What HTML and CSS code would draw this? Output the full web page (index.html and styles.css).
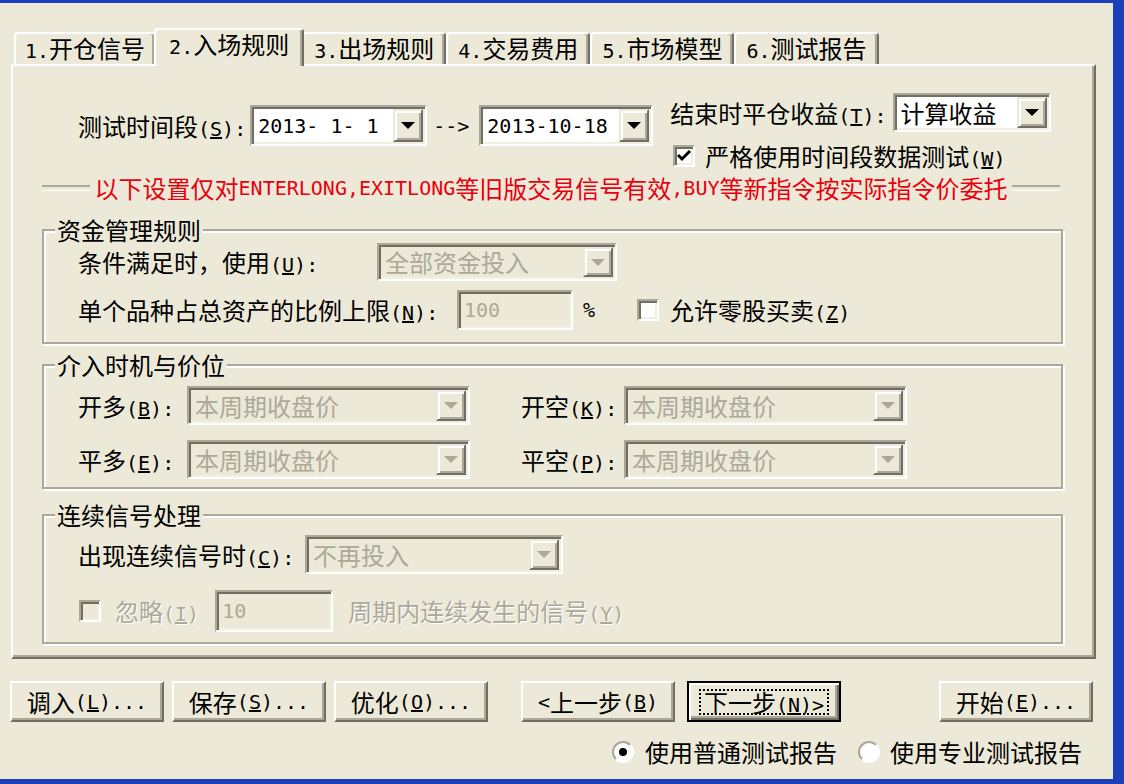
FILE: index.html
```html
<!DOCTYPE html>
<html>

<head>
    <meta charset="utf-8" />
    <title>测试设置</title>
    <link rel="stylesheet" href="styles.css">
</head>

<body>
    <div class="dialog">
        <div class="tabs">
            <div class="tab"><span class="en">1.</span>开仓信号</div>
            <div class="tab current"><span class="en">2.</span>入场规则</div>
            <div class="tab"><span class="en">3.</span>出场规则</div>
            <div class="tab"><span class="en">4.</span>交易费用</div>
            <div class="tab"><span class="en">5.</span>市场模型</div>
            <div class="tab"><span class="en">6.</span>测试报告</div>
        </div>

        <div class="panel">
            <div class="period">
                <div class="periodLeft">
                    <span class="dateLbl">测试时间段<span class="en">(<u>S</u>):</span></span>
                    <div class="combo dateFrom">
                        <span class="val en">2013- 1- 1</span>
                        <span class="drop"><i class="tri"></i></span>
                    </div>
                    <span class="en toTxt">--&gt;</span>
                    <div class="combo dateTo">
                        <span class="val en">2013-10-18</span>
                        <span class="drop"><i class="tri"></i></span>
                    </div>
                </div>
                <div class="periodRight">
                    <div class="closeRow">
                        <span class="closeLbl">结束时平仓收益<span class="en">(<u>T</u>):</span></span>
                        <div class="combo closeCombo">
                            <span class="val">计算收益</span>
                            <span class="drop"><i class="tri"></i></span>
                        </div>
                    </div>
                    <div class="strictRow">
                        <span class="chk">
                            <svg width="14" height="12" viewBox="0 0 14 12"><path d="M1 5 L5 9 L13 1" fill="none" stroke="#000" stroke-width="3"/></svg>
                        </span>
                        <span class="chkTxt">严格使用时间段数据测试<span class="en">(<u>W</u>)</span></span>
                    </div>
                </div>
            </div>

            <div class="notice">以下设置仅对<span class="en">ENTERLONG,EXITLONG</span>等旧版交易信号有效<span class="en">,BUY</span>等新指令按实际指令价委托</div>

            <!-- 资金管理 -->
            <div class="group money">
                <div class="gTitle">资金管理规则</div>
                <div class="gRow r1">
                    <span class="lblUse">条件满足时，使用<span class="en">(<u>U</u>):</span></span>
                    <div class="combo off useCombo">
                        <span class="val">全部资金投入</span>
                        <span class="drop"><i class="tri"></i></span>
                    </div>
                </div>
                <div class="gRow r2">
                    <span class="lblLimit">单个品种占总资产的比例上限<span class="en">(<u>N</u>):</span></span>
                    <div class="edit limitEdit"><span class="en">100</span></div>
                    <span class="en pct">%</span>
                    <span class="chk zeroChk"></span>
                    <span class="zeroTxt">允许零股买卖<span class="en">(<u>Z</u>)</span></span>
                </div>
            </div>

            <!-- 介入时机 -->
            <div class="group entry">
                <div class="gTitle">介入时机与价位</div>
                <div class="gRow r1">
                    <span class="lblLong">开多<span class="en">(<u>B</u>):</span></span>
                    <div class="combo off priceCombo">
                        <span class="val">本周期收盘价</span>
                        <span class="drop"><i class="tri"></i></span>
                    </div>
                    <span class="lblShort">开空<span class="en">(<u>K</u>):</span></span>
                    <div class="combo off priceCombo">
                        <span class="val">本周期收盘价</span>
                        <span class="drop"><i class="tri"></i></span>
                    </div>
                </div>
                <div class="gRow r2">
                    <span class="lblLong">平多<span class="en">(<u>E</u>):</span></span>
                    <div class="combo off priceCombo">
                        <span class="val">本周期收盘价</span>
                        <span class="drop"><i class="tri"></i></span>
                    </div>
                    <span class="lblShort">平空<span class="en">(<u>P</u>):</span></span>
                    <div class="combo off priceCombo">
                        <span class="val">本周期收盘价</span>
                        <span class="drop"><i class="tri"></i></span>
                    </div>
                </div>
            </div>

            <!-- 连续信号 -->
            <div class="group signal">
                <div class="gTitle">连续信号处理</div>
                <div class="gRow r1">
                    <span class="lblSeq">出现连续信号时<span class="en">(<u>C</u>):</span></span>
                    <div class="combo off seqCombo">
                        <span class="val">不再投入</span>
                        <span class="drop"><i class="tri"></i></span>
                    </div>
                </div>
                <div class="gRow r2">
                    <span class="chk offChk ignoreChk"></span>
                    <span class="dis ignoreTxt">忽略<span class="en">(<u>I</u>)</span></span>
                    <div class="edit countEdit"><span class="en">10</span></div>
                    <span class="dis countTxt">周期内连续发生的信号<span class="en">(<u>Y</u>)</span></span>
                </div>
            </div>
        </div>

        <div class="buttons">
            <div class="btn">调入<span class="en">(<u>L</u>)...</span></div>
            <div class="btn">保存<span class="en">(<u>S</u>)...</span></div>
            <div class="btn">优化<span class="en">(<u>O</u>)...</span></div>
            <div class="btn prev"><span class="en">&lt;</span>上一步<span class="en">(<u>B</u>)</span></div>
            <div class="btn next"><span class="focus">下一步<span class="en">(<u>N</u>)&gt;</span></span></div>
            <div class="btn start">开始<span class="en">(<u>E</u>)...</span></div>
        </div>

        <div class="reports">
            <span class="radio on"><i class="dot"></i></span>
            <span class="rTxt">使用普通测试报告</span>
            <span class="radio radio2"></span>
            <span class="rTxt">使用专业测试报告</span>
        </div>
    </div>
</body>

</html>
```

FILE: styles.css
```css
* {
    box-sizing: border-box;
}

html,
body {
    margin: 0px;
    padding: 0px;
}

body {
    width: 1124px;
    height: 784px;
    overflow: hidden;
    background: #1b3fb8;
    font-family: "Noto Sans CJK SC", sans-serif;
    font-size: 24px;
    line-height: 24px;
    color: #000;
}

.en {
    font-family: "DejaVu Sans Mono", "Liberation Mono", monospace;
    font-size: 20px;
    line-height: 14px;
    white-space: pre;
}

.dialog {
    width: 1113px;
    height: 776px;
    margin-top: 3px;
    padding-top: 25px;
    background: #ece9d8;
}

/* tabs */
.tabs {
    display: flex;
    align-items: flex-end;
    height: 36px;
    padding-left: 14px;
}

.tab {
    height: 32px;
    padding: 0 10px;
    border: 2px solid #fff;
    border-bottom: 0;
    border-right-color: #716f64;
    border-radius: 4px 4px 0 0;
    box-shadow: inset -2px 0 #aca899;
    line-height: 28px;
    white-space: nowrap;
}

.tab:first-child {
    padding: 0 9px;
}

.tab.current {
    height: 38px;
    margin: 0 -2px -2px;
    padding: 0 13px;
    position: relative;
    z-index: 1;
    background: #ece9d8;
}

.panel {
    margin-left: 11px;
    width: 1085px;
    height: 595px;
    border: 2px solid;
    border-color: #fff #716f64 #716f64 #fff;
    box-shadow: inset -2px -2px #aca899;
    padding-left: 29px;
}

/* combo / edit / check */
.combo {
    display: flex;
    padding: 2px;
    border: 2px solid;
    border-color: #aca899 #fff #fff #aca899;
    box-shadow: inset 2px 2px #716f64, inset -2px -2px #f1efe2;
    background: #fff;
}

.combo .val {
    flex: 1;
    display: flex;
    align-items: center;
    padding-left: 4px;
    white-space: nowrap;
}

.drop {
    width: 30px;
    display: flex;
    align-items: center;
    justify-content: center;
    border: 2px solid;
    border-color: #ece9d8 #716f64 #716f64 #ece9d8;
    box-shadow: inset 2px 2px #fff, inset -2px -2px #aca899;
    background: #ece9d8;
}

.tri {
    width: 0;
    height: 0;
    border-left: 7px solid transparent;
    border-right: 7px solid transparent;
    border-top: 7px solid #000;
}

.combo.off {
    background: #ece9d8;
    color: #aca899;
}

.combo.off .tri {
    border-top-color: #aca899;
}

.edit {
    display: flex;
    align-items: center;
    padding-left: 5px;
    border: 2px solid;
    border-color: #aca899 #fff #fff #aca899;
    box-shadow: inset 2px 2px #716f64, inset -2px -2px #f1efe2;
    background: #ece9d8;
    color: #aca899;
}

.chk {
    width: 22px;
    height: 22px;
    display: flex;
    align-items: center;
    justify-content: center;
    border: 2px solid;
    border-color: #aca899 #fff #fff #aca899;
    box-shadow: inset 2px 2px #716f64, inset -2px -2px #f1efe2;
    background: #fff;
}

.chk.offChk {
    background: #ece9d8;
}

.dis {
    color: #aca899;
    text-shadow: 1px 1px #fff;
}

/* top area */
.period {
    display: flex;
    align-items: flex-start;
    margin-top: 27px;
    padding-left: 36px;
}

.periodLeft {
    display: flex;
    align-items: center;
    margin-top: 12px;
}

.dateLbl {
    margin-right: 4px;
}

.dateFrom {
    width: 177px;
    height: 41px;
}

.toTxt {
    margin: 0 10px 0 6px;
}

.dateTo {
    width: 174px;
    height: 41px;
}

.periodRight {
    margin-left: 17px;
}

.closeRow {
    display: flex;
    align-items: center;
}

.closeLbl {
    margin-right: 6px;
}

.closeCombo {
    width: 158px;
    height: 39px;
}

.strictRow {
    display: flex;
    align-items: center;
    height: 22px;
    margin-top: 13px;
    padding-left: 3px;
}

.chkTxt {
    margin-left: 10px;
}

/* red notice line */
.notice {
    display: flex;
    align-items: center;
    width: 1018px;
    height: 24px;
    margin-top: 9px;
    color: #e8000e;
    white-space: nowrap;
}

.notice::before,
.notice::after {
    content: "";
    flex: 1;
    height: 3px;
    border-top: 2px solid #aca899;
    border-bottom: 1px solid #fff;
}

.notice::before {
    margin-right: 5px;
}

.notice::after {
    margin-left: 5px;
}

/* group boxes */
.group {
    width: 1021px;
    border: 2px solid #aca899;
    box-shadow: inset 2px 2px #fff, 2px 2px #fff;
    padding-left: 34px;
}

.gTitle {
    width: fit-content;
    height: 26px;
    margin: -14px 0 0 -23px;
    padding: 0 2px;
    line-height: 26px;
    background: #ece9d8;
}

.gRow {
    display: flex;
    align-items: center;
}

.money {
    margin-top: 29px;
    padding-bottom: 12px;
}

.money .r1 {
    height: 38px;
}

.money .r2 {
    height: 40px;
    margin-top: 9px;
}

.lblUse {
    width: 299px;
}

.useCombo {
    width: 240px;
    height: 38px;
}

.lblLimit {
    width: 379px;
}

.limitEdit {
    width: 116px;
    height: 40px;
}

.pct {
    margin-left: 10px;
}

.zeroChk {
    margin-left: 42px;
}

.zeroTxt {
    margin-left: 11px;
}

.entry {
    margin-top: 20px;
    padding-bottom: 8px;
}

.entry .r1 {
    height: 39px;
    margin-top: 8px;
}

.entry .r2 {
    height: 39px;
    margin-top: 15px;
}

.lblLong {
    width: 109px;
}

.lblShort {
    width: 103px;
    margin-left: 51px;
}

.priceCombo {
    width: 283px;
    height: 39px;
}

.signal {
    margin-top: 25px;
    padding-bottom: 10px;
}

.signal .r1 {
    height: 39px;
    margin-top: 7px;
}

.signal .r2 {
    height: 42px;
    margin-top: 16px;
}

.lblSeq {
    width: 227px;
}

.seqCombo {
    width: 258px;
    height: 39px;
}

.ignoreChk {
    margin-left: 1px;
}

.ignoreTxt {
    margin-left: 14px;
}

.countEdit {
    width: 118px;
    height: 42px;
    margin-left: 16px;
}

.countTxt {
    margin-left: 15px;
}

/* bottom buttons */
.buttons {
    display: flex;
    margin-top: 22px;
    padding-left: 10px;
}

.btn {
    width: 154px;
    height: 41px;
    display: flex;
    align-items: center;
    justify-content: center;
    border: 2px solid;
    border-color: #fff #716f64 #716f64 #fff;
    box-shadow: inset -2px -2px #aca899;
    white-space: nowrap;
}

.btn+.btn {
    margin-left: 8px;
}

.btn.prev {
    margin-left: 33px;
}

.btn.next {
    margin-left: 12px;
    border-color: #000;
    box-shadow: inset 2px 2px #fff, inset -2px -2px #716f64, inset -4px -4px #aca899;
}

.btn.start {
    margin-left: 98px;
}

.focus {
    padding: 0 3px;
    border: 2px dotted #000;
    line-height: 22px;
}

/* radios */
.reports {
    display: flex;
    align-items: center;
    height: 24px;
    margin-top: 18px;
    padding-left: 612px;
}

.radio {
    width: 22px;
    height: 22px;
    display: flex;
    align-items: center;
    justify-content: center;
    border-radius: 50%;
    border: 2px solid;
    border-color: #aca899 #fff #fff #aca899;
    background: #fff;
}

.dot {
    width: 8px;
    height: 8px;
    border-radius: 50%;
    background: #000;
}

.rTxt {
    margin-left: 11px;
}

.radio2 {
    margin-left: 21px;
}

.radio2+.rTxt {
    margin-left: 10px;
}
```
